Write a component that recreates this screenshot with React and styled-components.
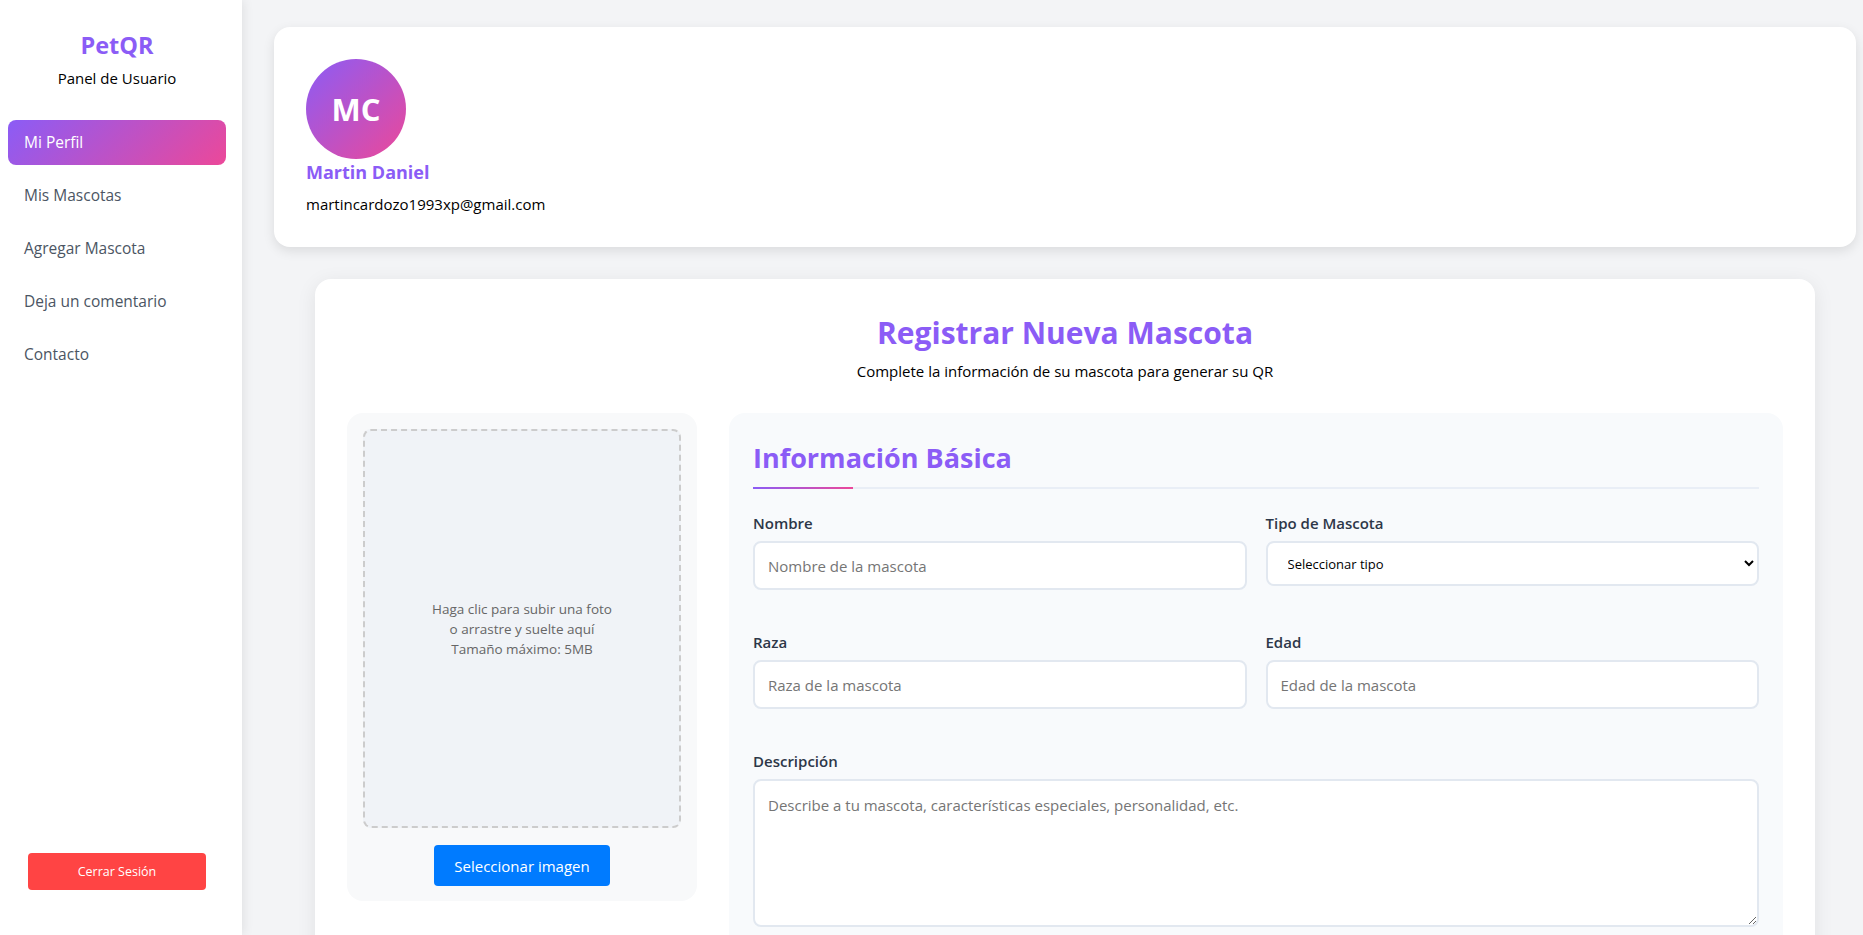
import React from 'react';
import styled, { createGlobalStyle } from 'styled-components';

const GlobalStyle = createGlobalStyle`
  * { box-sizing: border-box; }
  html, body {
    margin: 0;
    padding: 0;
    height: 100%;
    overflow: hidden;
  }
  body {
    font-family: "Segoe UI", "Open Sans", "Noto Sans", sans-serif;
    background: #f3f4f6;
    color: #000;
  }
`;

const Shell = styled.div`
  display: flex;
  height: 100vh;
  overflow: hidden;
`;

const Sidebar = styled.aside`
  width: 242px;
  flex-shrink: 0;
  background: #fff;
  box-shadow: 2px 0 10px rgba(0, 0, 0, 0.08);
  display: flex;
  flex-direction: column;
  padding: 29px 16px 45px 8px;
  position: relative;
  z-index: 1;
`;

const Brand = styled.div`
  text-align: center;
  margin-bottom: 31px;
`;

const Logo = styled.div`
  font-size: 23.5px;
  line-height: 32px;
  font-weight: 700;
  color: #8b5cf6;
`;

const BrandSub = styled.div`
  font-size: 15px;
  line-height: 22px;
  margin-top: 6px;
  color: #000;
`;

const Nav = styled.nav`
  display: flex;
  flex-direction: column;
  gap: 8px;
`;

const NavItem = styled.a`
  display: block;
  padding: 12px 16px;
  border-radius: 8px;
  font-size: 15.5px;
  line-height: 21px;
  text-decoration: none;
  cursor: pointer;
  color: ${(p) => (p.$active ? '#fff' : '#4b5563')};
  background: ${(p) =>
    p.$active ? 'linear-gradient(135deg, #8b5cf6 0%, #ec4899 100%)' : 'transparent'};
`;

const Logout = styled.button`
  margin: auto 20px 0;
  height: 37px;
  border: none;
  border-radius: 4px;
  background: #ff4444;
  color: #fff;
  font-family: inherit;
  font-size: 12.5px;
  cursor: pointer;
`;

const Main = styled.main`
  flex: 1;
  padding: 27px 7px 0 32px;
  overflow: hidden;
`;

const ProfileCard = styled.section`
  background: #fff;
  border-radius: 16px;
  box-shadow: 0 4px 12px rgba(0, 0, 0, 0.1);
  padding: 32px;
  display: flex;
  flex-direction: column;
  align-items: flex-start;
`;

const Avatar = styled.div`
  width: 100px;
  height: 100px;
  border-radius: 50%;
  background: linear-gradient(135deg, #8b5cf6 0%, #ec4899 100%);
  color: #fff;
  font-size: 31px;
  font-weight: 700;
  display: flex;
  align-items: center;
  justify-content: center;
`;

const UserName = styled.div`
  font-size: 18px;
  line-height: 26px;
  font-weight: 700;
  color: #8b5cf6;
`;

const UserEmail = styled.div`
  font-size: 15px;
  line-height: 21px;
  margin-top: 9px;
`;

const FormCard = styled.section`
  max-width: 1500px;
  margin: 32px auto 0;
  background: #fff;
  border-radius: 16px;
  box-shadow: 0 4px 20px rgba(0, 0, 0, 0.08);
  padding: 33px 32px 32px;
`;

const FormTitle = styled.h1`
  margin: 0;
  text-align: center;
  font-size: 30px;
  line-height: 42px;
  font-weight: 700;
  color: #8b5cf6;
`;

const FormSubtitle = styled.p`
  margin: 6px 0 0;
  text-align: center;
  font-size: 15px;
  line-height: 22px;
`;

const FormGrid = styled.div`
  display: grid;
  grid-template-columns: 350px 1fr;
  gap: 32px;
  margin-top: 31px;
  align-items: start;
`;

const PhotoPanel = styled.div`
  background: #f8f9fa;
  border-radius: 16px;
  padding: 16px 16px 15px;
  display: flex;
  flex-direction: column;
  align-items: center;
`;

const DropZone = styled.div`
  width: 100%;
  height: 399px;
  border: 2px dashed #cccccc;
  border-radius: 8px;
  background: #f0f3f7;
  display: flex;
  align-items: center;
  justify-content: center;
  text-align: center;
  color: #666;
  font-size: 13.5px;
  line-height: 20px;
`;

const PickButton = styled.button`
  margin-top: 17px;
  height: 41px;
  padding: 0 20px;
  border: none;
  border-radius: 4px;
  background: #007bff;
  color: #fff;
  font-family: inherit;
  font-size: 15px;
  cursor: pointer;
`;

const InfoPanel = styled.div`
  background: #f8fafc;
  border-radius: 16px;
  padding: 26px 24px 40px;
`;

const SectionTitle = styled.h2`
  position: relative;
  margin: 0 0 24px;
  padding-bottom: 10px;
  border-bottom: 2px solid #e9eef6;
  font-size: 27px;
  line-height: 38px;
  font-weight: 700;
  color: #8b5cf6;

  &::after {
    content: '';
    position: absolute;
    left: 0;
    bottom: -2px;
    width: 100px;
    height: 2px;
    background: linear-gradient(90deg, #8b5cf6, #ec4899);
  }
`;

const Fields = styled.div`
  display: grid;
  grid-template-columns: 1fr 1fr;
  column-gap: 19px;
  row-gap: 42px;
  align-items: start;
`;

const Field = styled.div`
  display: flex;
  flex-direction: column;
  grid-column: ${(p) => (p.$wide ? '1 / -1' : 'auto')};
`;

const Label = styled.label`
  font-size: 15px;
  line-height: 20px;
  font-weight: 600;
  color: #2d3748;
  margin-bottom: 8px;
`;

const fieldBase = `
  width: 100%;
  border: 2px solid #e2e8f0;
  border-radius: 8px;
  background: #fff;
  font-family: inherit;
  outline: none;
  &::placeholder { color: #757575; }
`;

const TextInput = styled.input`
  ${fieldBase}
  height: 49px;
  padding: 0 13px;
  font-size: 15px;
`;

const Select = styled.select`
  ${fieldBase}
  height: 45px;
  padding: 0 16px;
  font-size: 13px;
  color: #000;
`;

const TextArea = styled.textarea`
  ${fieldBase}
  height: 148px;
  padding: 13px 13px;
  font-size: 15px;
  line-height: 22px;
  resize: vertical;
`;

export default function App() {
  const nav = ['Mi Perfil', 'Mis Mascotas', 'Agregar Mascota', 'Deja un comentario', 'Contacto'];

  return (
    <>
      <GlobalStyle />
      <Shell>
        <Sidebar>
          <Brand>
            <Logo>PetQR</Logo>
            <BrandSub>Panel de Usuario</BrandSub>
          </Brand>
          <Nav>
            {nav.map((item, i) => (
              <NavItem key={item} $active={i === 0}>
                {item}
              </NavItem>
            ))}
          </Nav>
          <Logout>Cerrar Sesión</Logout>
        </Sidebar>

        <Main>
          <ProfileCard>
            <Avatar>MC</Avatar>
            <UserName>Martin Daniel</UserName>
            <UserEmail>martincardozo1993xp@gmail.com</UserEmail>
          </ProfileCard>

          <FormCard>
            <FormTitle>Registrar Nueva Mascota</FormTitle>
            <FormSubtitle>Complete la información de su mascota para generar su QR</FormSubtitle>

            <FormGrid>
              <PhotoPanel>
                <DropZone>
                  <div>
                    Haga clic para subir una foto
                    <br />
                    o arrastre y suelte aquí
                    <br />
                    Tamaño máximo: 5MB
                  </div>
                </DropZone>
                <PickButton>Seleccionar imagen</PickButton>
              </PhotoPanel>

              <InfoPanel>
                <SectionTitle>Información Básica</SectionTitle>
                <Fields>
                  <Field>
                    <Label>Nombre</Label>
                    <TextInput placeholder="Nombre de la mascota" />
                  </Field>
                  <Field>
                    <Label>Tipo de Mascota</Label>
                    <Select defaultValue="">
                      <option value="">Seleccionar tipo</option>
                      <option value="perro">Perro</option>
                      <option value="gato">Gato</option>
                      <option value="otro">Otro</option>
                    </Select>
                  </Field>
                  <Field>
                    <Label>Raza</Label>
                    <TextInput placeholder="Raza de la mascota" />
                  </Field>
                  <Field>
                    <Label>Edad</Label>
                    <TextInput placeholder="Edad de la mascota" />
                  </Field>
                  <Field $wide>
                    <Label>Descripción</Label>
                    <TextArea placeholder="Describe a tu mascota, características especiales, personalidad, etc." />
                  </Field>
                </Fields>
              </InfoPanel>
            </FormGrid>
          </FormCard>
        </Main>
      </Shell>
    </>
  );
}
